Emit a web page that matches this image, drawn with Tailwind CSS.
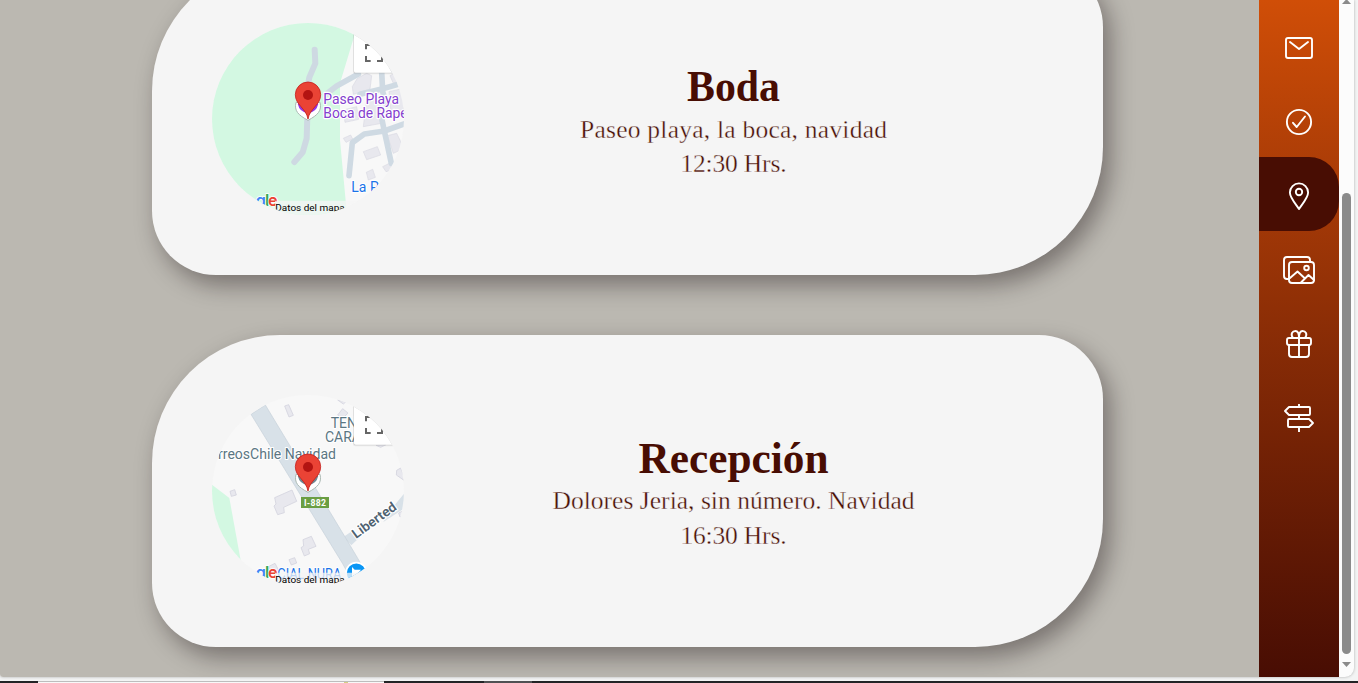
<!DOCTYPE html>
<html lang="es">
<head>
<meta charset="utf-8">
<title>Ubicaciones</title>
<script src="https://cdn.jsdelivr.net/npm/@tailwindcss/browser@4"></script>
</head>
<body class="h-[683px] w-[1358px] overflow-hidden bg-[#f3f4f4] flex flex-col">
<div class="flex h-[677px] w-[1354px] shrink-0 rounded-br-[9px] rounded-bl-[3px] overflow-hidden bg-[#fcfcfc] shadow-[0_0_3px_rgba(0,0,0,0.3)]">
  <main class="w-[1259px] h-full overflow-hidden bg-[#bbb8b1] pl-[152px]">
    <div class="-mt-[37px] flex flex-col gap-[60px] w-[951px]">
      <section class="flex h-[312px] gap-5 p-[60px] bg-[#f5f5f5] rounded-tl-[128px] rounded-tr-[64px] rounded-br-[128px] rounded-bl-[64px] shadow-[7px_10px_23px_rgba(20,10,12,0.4)]">
        <svg class="size-[192px] shrink-0 rounded-full" viewBox="36 24 576 576" font-family="Roboto, sans-serif">
          <rect x="36" y="24" width="576" height="576" fill="#f8f8f8"/>
          <path d="M36 24H474L463 62L420 205V375L441 600H36Z" fill="#d3f8e2"/>
          <g fill="#e8e8ee" stroke="#d9d9e3" stroke-width="2">
            <path d="M472 190L500 175L515 182L510 222L460 238L457 215Z"/><path d="M570 182L597 168L612 195L580 205Z"/>
            <path d="M490 410L532 395L542 420L500 434Z"/><path d="M499 472L518 463L526 487L505 495Z"/>
            <path d="M548 455L568 445L580 463L558 470Z"/><path d="M562 362L590 355L612 400L580 415Z"/>
            <path d="M430 285L470 275L476 313L435 322Z"/><path d="M500 255L540 245L544 325L490 335Z"/><path d="M567 230L612 220V300L575 310Z"/><path d="M430 370L452 360L458 372L438 382Z"/>
          </g>
          <g fill="none" stroke="#cfdae3" stroke-width="17" stroke-linejoin="round" stroke-linecap="round">
            <path d="M378 238L410 213L475 177"/><path d="M612 203L545 222L480 238"/><path d="M545 170L548 230L560 270"/>
            <path d="M447 482L457 383L493 357L553 348L612 327"/><path d="M543 300L553 348L574 445"/><path d="M575 165L612 178"/>
          </g>
          <g fill="none" stroke="#ced9e2" stroke-width="18" stroke-linejoin="round" stroke-linecap="round">
            <path d="M344 104L346 145L328 187L320 230"/><path d="M322 305L320 370L308 412L283 441"/>
          </g>
          <g font-size="42" fill="#8440ce" stroke="#fff" stroke-width="7" stroke-linejoin="round" paint-order="stroke">
            <text x="370" y="267" textLength="227" lengthAdjust="spacingAndGlyphs">Paseo Playa</text>
            <text x="370" y="309" textLength="263" lengthAdjust="spacingAndGlyphs">Boca de Rapel</text>
          </g>
          <text x="454" y="531" font-size="42" fill="#1b73e8" stroke="#fff" stroke-width="6" paint-order="stroke">La P</text>
          <path d="M288 262C282 287 294 300 324 316C354 300 366 287 360 262Z" fill="#fff" stroke="#aab8b2" stroke-width="3"/>
          <path d="M293 266Q299 292 324 294Q349 292 355 266Z" fill="#9334e6"/>
          <g id="pin"><path d="M324 312C319 280 286 270 286 239A38 38 0 0 1 362 239C362 270 329 280 324 312Z" fill="#ea4335" stroke="#c5221f" stroke-width="2.5"/><circle cx="324" cy="240" r="15" fill="#b31412"/></g>
          <g id="controls">
            <rect x="459" y="54" width="130" height="124" rx="7" fill="#999" opacity=".15"/>
            <rect x="461" y="54" width="126" height="121" rx="5" fill="#999" opacity=".35"/>
            <rect x="462" y="50" width="125" height="123" rx="5" fill="#fff"/>
            <path d="M498 103V90H510M534 90H546V103M498 123V138H512M531 138H546V123" fill="none" stroke="#666" stroke-width="6"/>
            <g font-family="Inter, sans-serif" font-size="49" font-weight="600" stroke="#fff" stroke-width="4" paint-order="stroke"><text x="167" y="572" fill="#4285f4">g</text><text x="195" y="572" fill="#34a853">l</text><text x="204" y="572" fill="#ea4335">e</text></g>
            <path d="M36 576H225V557H612V600H36Z" fill="#f5f5f5" opacity=".75"/>
            <text x="226" y="588" font-size="29" fill="#000" textLength="208" lengthAdjust="spacingAndGlyphs">Datos del mapa</text>
          </g>
        </svg>
        <svg class="h-[192px] w-[619px]" viewBox="424 23 619 192" fill="#480d03" text-anchor="middle" font-family="'Liberation Serif', serif">
          <text x="733.5" y="101" font-size="44" font-weight="700" textLength="93" lengthAdjust="spacingAndGlyphs">Boda</text>
          <g font-size="25.5" stroke="#f5f5f5" stroke-width=".35">
            <text x="733.5" y="137.5" textLength="307" lengthAdjust="spacing">Paseo playa, la boca, navidad</text>
            <text x="733.5" y="172" textLength="106" lengthAdjust="spacing">12:30 Hrs.</text>
          </g>
        </svg>
      </section>
      <section class="flex h-[312px] gap-5 p-[60px] bg-[#f5f5f5] rounded-tl-[128px] rounded-tr-[64px] rounded-br-[128px] rounded-bl-[64px] shadow-[7px_10px_23px_rgba(20,10,12,0.4)]">
        <svg class="size-[192px] shrink-0 rounded-full" viewBox="36 24 576 576" font-family="Roboto, sans-serif">
          <rect x="36" y="24" width="576" height="576" fill="#f8f8f8"/>
          <path d="M36 293L88 333L122 520L36 500Z" fill="#d3f8e2"/>
          <g fill="#e8e8ee" stroke="#d4d4df" stroke-width="2.5">
            <path d="M254 57L266 53L280 85L267 90Z"/><path d="M90 313L104 308L109 324L94 328Z"/>
            <path d="M224 332L276 309L290 343L251 361L253 377L233 383L222 357L228 351Z"/>
            <path d="M309 458L334 448L348 478L325 487L329 500L313 507L303 482L311 477Z"/>
            <path d="M267 518L284 512L290 528L274 534Z"/><path d="M207 538L225 529L237 552L210 558Z"/>
            <path d="M413 84L428 65L444 78L427 96Z"/><path d="M413 39L438 44L430 51Z"/><path d="M590 250L602 243L612 268V280L589 264Z"/>
            <path d="M596 378L612 370V390L600 390Z"/><path d="M528 175L558 173L542 181Z"/>
          </g>
          <path d="M560 383L612 320V365L550 405Z" fill="#d8e1e8"/>
          <path d="M430 450L460 430L480 450L454 475Z" fill="#d8e1e8"/>
          <path d="M153 82L196 54L434 448L449 473L515 585L455 580L428 530Z" fill="#d8e1e8" stroke="#c5d0d9" stroke-width="2"/>
          <g fill="#5b7683" stroke="#fff" stroke-width="6" stroke-linejoin="round" paint-order="stroke">
            <text x="54" y="216" font-size="42" textLength="354" lengthAdjust="spacingAndGlyphs">rreosChile Navidad</text>
            <text x="392" y="123" font-size="42">TENT</text><text x="375" y="165" font-size="42">CARAS</text>
          </g>
          <text x="468" y="456" transform="rotate(-36 468 456)" font-size="40" font-weight="600" fill="#4e6170" stroke="#fff" stroke-width="7" paint-order="stroke" textLength="154" lengthAdjust="spacingAndGlyphs">Liberted</text>
          <rect x="303" y="330" width="84" height="33" fill="#6a9e43"/>
          <text x="345" y="356" text-anchor="middle" font-size="26" font-weight="700" fill="#fff" textLength="66">I-882</text>
          <text x="232" y="577" font-size="42" fill="#1b73e8" stroke="#fff" stroke-width="5" paint-order="stroke" textLength="192" lengthAdjust="spacingAndGlyphs">CIAL NURA</text>
          <circle cx="469" cy="558" r="31" fill="#0a96f5" stroke="#fff" stroke-width="5"/>
          <path d="M456 540L464 548H483L469 565L456 580Z" fill="#fff"/>
          <path d="M288 262C282 287 294 300 324 316C354 300 366 287 360 262Z" fill="#fff" stroke="#aab8b2" stroke-width="3"/>
          <path d="M293 266Q299 292 324 294Q349 292 355 266Z" fill="#6f858f"/>
          <use href="#pin"/><use href="#controls"/>
        </svg>
        <svg class="h-[192px] w-[619px]" viewBox="424 395 619 192" fill="#480d03" text-anchor="middle" font-family="'Liberation Serif', serif">
          <text x="733.5" y="473" font-size="44" font-weight="700" textLength="190" lengthAdjust="spacingAndGlyphs">Recepción</text>
          <g font-size="25.5" stroke="#f5f5f5" stroke-width=".35">
            <text x="733.5" y="509" textLength="362" lengthAdjust="spacing">Dolores Jeria, sin número. Navidad</text>
            <text x="733.5" y="544" textLength="106" lengthAdjust="spacing">16:30 Hrs.</text>
          </g>
        </svg>
      </section>
    </div>
  </main>
  <nav class="flex h-full w-20 flex-col bg-linear-to-b from-[#d04e07] to-[#480d03] pt-[9px]">
    <a class="flex h-[74px] items-center justify-center pt-0.5"><svg class="size-9" viewBox="0 0 36 36" fill="none" stroke="#fff" stroke-width="1.9" stroke-linecap="round" stroke-linejoin="round"><rect x="5" y="9" width="26" height="20" rx="2"/><path d="M9 13L18 20L27 13"/></svg></a>
    <a class="flex h-[74px] items-center justify-center pt-1"><svg class="size-9" viewBox="0 0 36 36" fill="none" stroke="#fff" stroke-width="1.9" stroke-linecap="round" stroke-linejoin="round"><circle cx="18" cy="18" r="12.1"/><path d="M12 18.800L15.700 23L24 12.500"/></svg></a>
    <a class="flex h-[74px] items-center justify-center rounded-r-[30px] bg-[#480d03] pt-1"><svg class="size-9" viewBox="0 0 36 36" fill="none" stroke="#fff" stroke-width="1.9" stroke-linejoin="round"><path d="M18 31C16 27.500 8.900 20 8.900 14.500A9.100 9.100 0 0 1 27.100 14.500C27.100 20 20 27.500 18 31Z"/><circle cx="18" cy="14" r="3.200"/></svg></a>
    <a class="flex h-[74px] items-center justify-center pt-1"><svg class="size-9" viewBox="0 0 36 36" fill="none" stroke="#fff" stroke-width="1.9" stroke-linecap="round" stroke-linejoin="round"><path d="M7.500 27H6Q3 27 3 24V8Q3 5 6 5H26Q29 5 29 8V10"/><rect x="8" y="10" width="25" height="21" rx="3"/><path d="M9 26L16.500 19.500L23.500 26M19.500 31L27.500 23L33 28"/><circle cx="25.500" cy="16" r="2.300"/></svg></a>
    <a class="flex h-[74px] items-center justify-center pt-1"><svg class="size-9" viewBox="0 0 36 36" fill="none" stroke="#fff" stroke-width="1.9" stroke-linejoin="round"><rect x="6" y="12" width="24" height="7" rx="2"/><path d="M8 19V28Q8 31 11 31H25Q28 31 28 28V19M18 12V31M12 12C9 8 11.500 5 14.500 5C17 5 18 7 18 12C18 7 19 5 21.500 5C24.500 5 27 8 24 12"/></svg></a>
    <a class="flex h-[74px] items-center justify-center pt-1"><svg class="size-9" viewBox="0 0 36 36" fill="none" stroke="#fff" stroke-width="1.9" stroke-linejoin="round"><path d="M18 4V7M18 15V19M18 27V32M8 7H28Q29 7 29 8V14Q29 15 28 15H8L4 11ZM8 19H28L32 23L28 27H8Q7 27 7 26V20Q7 19 8 19Z"/></svg></a>
  </nav>
  <div class="flex w-[15px] flex-col items-center">
    <svg class="h-[193px] w-[15px]" viewBox="0 0 15 193"><path d="M3 4L7.500 -1L12 4Z" fill="#8b8b8b"/></svg>
    <div class="h-[461px] w-[9px] rounded-full bg-[#8b8b8b]"></div>
    <svg class="h-[23px] w-[15px]" viewBox="0 0 15 23"><path d="M3 8H12L7.500 13Z" fill="#8b8b8b"/></svg>
  </div>
</div>
<div class="mt-[4px] flex h-[2px] shrink-0 bg-[#232426]">
  <div class="w-[38px]"></div>
  <div class="w-[346px] border-t border-[#bdbdbd] bg-[#f8f8f8] pl-[306px]"><div class="h-px w-1 bg-[#d3cf86]"></div></div>
  <div class="w-[68px]"></div><div class="w-[32px]"></div><div class="w-[48px] bg-[#505153]"></div>
</div>
</body>
</html>
